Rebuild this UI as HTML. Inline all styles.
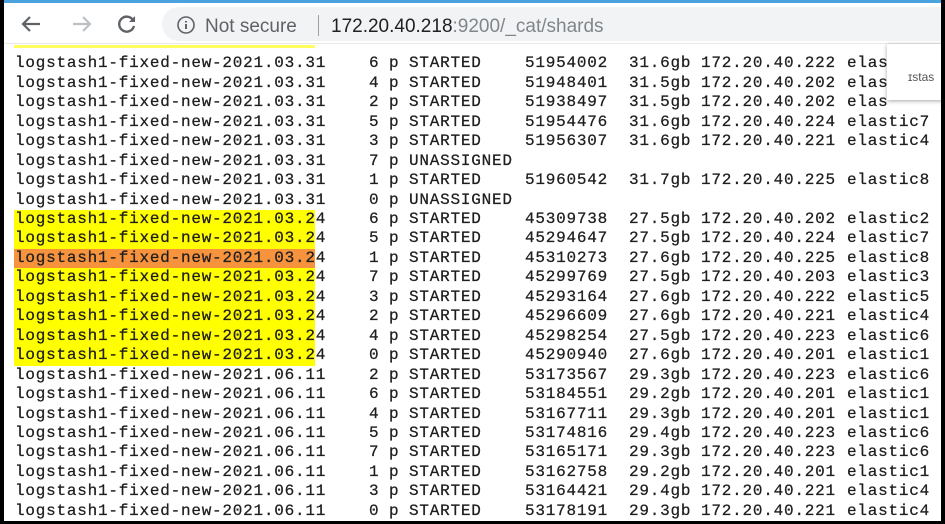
<!DOCTYPE html>
<html><head><meta charset="utf-8"><style>
*{margin:0;padding:0;box-sizing:border-box}
body{width:945px;height:524px;overflow:hidden;background:#000;position:relative;font-family:"Liberation Sans",sans-serif}
#page{position:absolute;left:4px;top:0;width:937px;height:521px;background:#fff;overflow:hidden}
#blue{position:absolute;left:0;top:0;width:100%;height:3px;background:#4aa3df}
#bar{position:absolute;left:0;top:3px;width:100%;height:41px;background:#fff;border-bottom:1px solid #e8e8e8}
#omni{position:absolute;left:158px;top:4px;width:800px;height:34px;border-radius:17px;background:#f1f3f4}
.t{position:absolute;font-size:19px;color:#5f6368;top:13px}
.row{position:absolute;left:0;height:19.45px;width:100%;font-family:"Liberation Mono",monospace;font-size:16px;letter-spacing:0.77px;color:#1e1e1e;line-height:19.45px;white-space:pre;-webkit-text-stroke:0.25px #1e1e1e}
.row span{position:absolute;top:0}
.hl{position:absolute;left:10px;width:301px;height:100%;background:#ffff00}
.or{background:#f7923d}
#pop{position:absolute;left:883px;top:44px;width:60px;height:56px;background:#fff;box-shadow:0 1px 4px rgba(0,0,0,.35);font-size:12px;color:#555}
</style></head><body><div id="page">
<div id="blue"></div>
<div id="bar">
<svg style="position:absolute;left:16px;top:11px" width="22" height="20" viewBox="0 0 22 20"><path d="M20 10H3M10 3L3 10l7 7" stroke="#5f6368" stroke-width="2.2" fill="none"/></svg>
<svg style="position:absolute;left:67px;top:11px" width="22" height="20" viewBox="0 0 22 20"><path d="M2 10h17M12 3l7 7-7 7" stroke="#bdc1c6" stroke-width="2.2" fill="none"/></svg>
<svg style="position:absolute;left:112px;top:10px" width="22" height="22" viewBox="0 0 22 22"><path d="M17 7A7.5 7.5 0 1 0 18 13" stroke="#5f6368" stroke-width="2.4" fill="none"/><path d="M19 3v6h-6z" fill="#5f6368"/></svg>
<div id="omni"></div>
<svg style="position:absolute;left:172px;top:12px" width="20" height="20" viewBox="0 0 20 20"><circle cx="10" cy="10" r="8" stroke="#5f6368" stroke-width="1.6" fill="none"/><path d="M10 9v5M10 6v1.5" stroke="#5f6368" stroke-width="2"/></svg>
<div class="t" style="left:201px">Not secure</div>
<div style="position:absolute;left:314px;top:12px;width:1px;height:21px;background:#9aa0a6"></div>
<div class="t" style="left:327px;color:#202124">172.20.40.218<span style="color:#80868b">:9200/_cat/shards</span></div>
</div>
<div style="position:absolute;left:10px;top:45px;width:301px;height:3px;background:#ffff60"></div>
<div id="rows"></div>
<div id="pop"><span style="position:absolute;left:21px;top:26px">ɪstas</span></div>
</div>
<script>
var d=[
["03.31","6","STARTED","51954002","31.6gb","172.20.40.222","elas",0],
["03.31","4","STARTED","51948401","31.5gb","172.20.40.202","elas",0],
["03.31","2","STARTED","51938497","31.5gb","172.20.40.202","elas",0],
["03.31","5","STARTED","51954476","31.6gb","172.20.40.224","elastic7",0],
["03.31","3","STARTED","51956307","31.6gb","172.20.40.221","elastic4",0],
["03.31","7","UNASSIGNED","","","","",0],
["03.31","1","STARTED","51960542","31.7gb","172.20.40.225","elastic8",0],
["03.31","0","UNASSIGNED","","","","",0],
["03.24","6","STARTED","45309738","27.5gb","172.20.40.202","elastic2",1],
["03.24","5","STARTED","45294647","27.5gb","172.20.40.224","elastic7",1],
["03.24","1","STARTED","45310273","27.6gb","172.20.40.225","elastic8",2],
["03.24","7","STARTED","45299769","27.5gb","172.20.40.203","elastic3",1],
["03.24","3","STARTED","45293164","27.6gb","172.20.40.222","elastic5",1],
["03.24","2","STARTED","45296609","27.6gb","172.20.40.221","elastic4",1],
["03.24","4","STARTED","45298254","27.5gb","172.20.40.223","elastic6",1],
["03.24","0","STARTED","45290940","27.6gb","172.20.40.201","elastic1",1],
["06.11","2","STARTED","53173567","29.3gb","172.20.40.223","elastic6",0],
["06.11","6","STARTED","53184551","29.2gb","172.20.40.201","elastic1",0],
["06.11","4","STARTED","53167711","29.3gb","172.20.40.201","elastic1",0],
["06.11","5","STARTED","53174816","29.4gb","172.20.40.223","elastic6",0],
["06.11","7","STARTED","53165171","29.3gb","172.20.40.223","elastic6",0],
["06.11","1","STARTED","53162758","29.2gb","172.20.40.201","elastic1",0],
["06.11","3","STARTED","53164421","29.4gb","172.20.40.221","elastic4",0],
["06.11","0","STARTED","53178191","29.3gb","172.20.40.221","elastic4",0]];
var xs=[11,365,385,405,521,625,697,843],h="";
d.forEach(function(r,i){
var top=54.4+i*19.45;
h+='<div class="row" style="top:'+top+'px">';
if(r[7])h+='<div class="hl'+(r[7]==2?' or':'')+'"></div>';
var c=["logstash1-fixed-new-2021."+r[0],r[1],"p",r[2],r[3],r[4],r[5],r[6]];
c.forEach(function(v,j){if(v)h+='<span style="left:'+xs[j]+'px">'+v+'</span>'});
h+='</div>';});
document.getElementById("rows").innerHTML=h;
</script>
</body></html>
